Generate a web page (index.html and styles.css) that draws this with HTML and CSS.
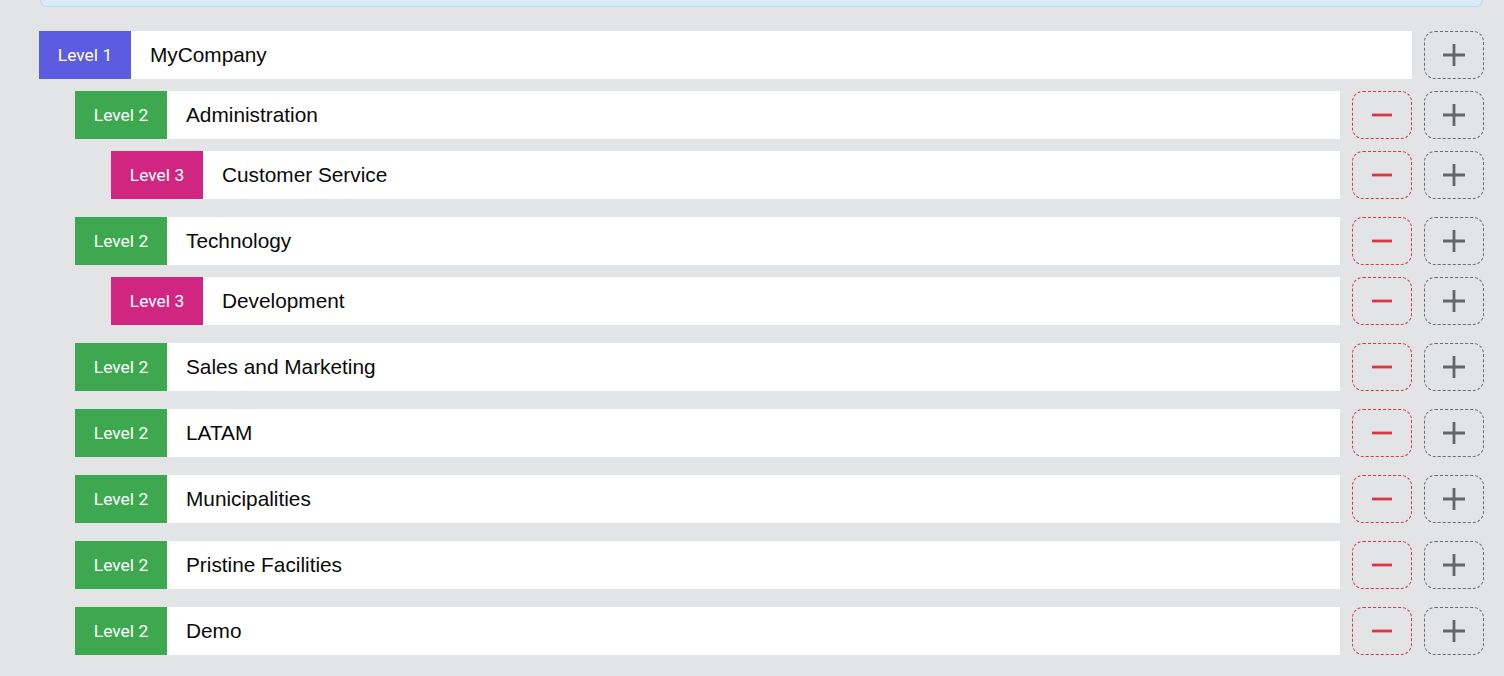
FILE: index.html
```html
<!DOCTYPE html>
<html lang="en">
<head>
<meta charset="utf-8">
<title>Org tree</title>
<link rel="stylesheet" href="styles.css">
</head>
<body>
<div class="page">
  <div class="notice"></div>
  <div class="tree">
    <div class="node">
      <div class="row">
        <div class="field"><span class="badge l1">Level 1</span><span class="label">MyCompany</span></div>
        <button class="btn add" aria-label="Add"><svg viewBox="0 0 24 24" width="24" height="24"><path d="M12 1v22M1 12h22"/></svg></button>
      </div>
      <div class="children">
        <div class="node">
          <div class="row">
            <div class="field"><span class="badge l2">Level 2</span><span class="label">Administration</span></div>
            <button class="btn remove" aria-label="Remove"><svg viewBox="0 0 24 24" width="24" height="24"><path d="M2 12h20"/></svg></button>
            <button class="btn add" aria-label="Add"><svg viewBox="0 0 24 24" width="24" height="24"><path d="M12 1v22M1 12h22"/></svg></button>
          </div>
          <div class="children">
            <div class="node">
              <div class="row">
                <div class="field"><span class="badge l3">Level 3</span><span class="label">Customer Service</span></div>
                <button class="btn remove" aria-label="Remove"><svg viewBox="0 0 24 24" width="24" height="24"><path d="M2 12h20"/></svg></button>
                <button class="btn add" aria-label="Add"><svg viewBox="0 0 24 24" width="24" height="24"><path d="M12 1v22M1 12h22"/></svg></button>
              </div>
            </div>
          </div>
        </div>
        <div class="node">
          <div class="row">
            <div class="field"><span class="badge l2">Level 2</span><span class="label">Technology</span></div>
            <button class="btn remove" aria-label="Remove"><svg viewBox="0 0 24 24" width="24" height="24"><path d="M2 12h20"/></svg></button>
            <button class="btn add" aria-label="Add"><svg viewBox="0 0 24 24" width="24" height="24"><path d="M12 1v22M1 12h22"/></svg></button>
          </div>
          <div class="children">
            <div class="node">
              <div class="row">
                <div class="field"><span class="badge l3">Level 3</span><span class="label">Development</span></div>
                <button class="btn remove" aria-label="Remove"><svg viewBox="0 0 24 24" width="24" height="24"><path d="M2 12h20"/></svg></button>
                <button class="btn add" aria-label="Add"><svg viewBox="0 0 24 24" width="24" height="24"><path d="M12 1v22M1 12h22"/></svg></button>
              </div>
            </div>
          </div>
        </div>
        <div class="node">
          <div class="row">
            <div class="field"><span class="badge l2">Level 2</span><span class="label">Sales and Marketing</span></div>
            <button class="btn remove" aria-label="Remove"><svg viewBox="0 0 24 24" width="24" height="24"><path d="M2 12h20"/></svg></button>
            <button class="btn add" aria-label="Add"><svg viewBox="0 0 24 24" width="24" height="24"><path d="M12 1v22M1 12h22"/></svg></button>
          </div>
        </div>
        <div class="node">
          <div class="row">
            <div class="field"><span class="badge l2">Level 2</span><span class="label">LATAM</span></div>
            <button class="btn remove" aria-label="Remove"><svg viewBox="0 0 24 24" width="24" height="24"><path d="M2 12h20"/></svg></button>
            <button class="btn add" aria-label="Add"><svg viewBox="0 0 24 24" width="24" height="24"><path d="M12 1v22M1 12h22"/></svg></button>
          </div>
        </div>
        <div class="node">
          <div class="row">
            <div class="field"><span class="badge l2">Level 2</span><span class="label">Municipalities</span></div>
            <button class="btn remove" aria-label="Remove"><svg viewBox="0 0 24 24" width="24" height="24"><path d="M2 12h20"/></svg></button>
            <button class="btn add" aria-label="Add"><svg viewBox="0 0 24 24" width="24" height="24"><path d="M12 1v22M1 12h22"/></svg></button>
          </div>
        </div>
        <div class="node">
          <div class="row">
            <div class="field"><span class="badge l2">Level 2</span><span class="label">Pristine Facilities</span></div>
            <button class="btn remove" aria-label="Remove"><svg viewBox="0 0 24 24" width="24" height="24"><path d="M2 12h20"/></svg></button>
            <button class="btn add" aria-label="Add"><svg viewBox="0 0 24 24" width="24" height="24"><path d="M12 1v22M1 12h22"/></svg></button>
          </div>
        </div>
        <div class="node">
          <div class="row">
            <div class="field"><span class="badge l2">Level 2</span><span class="label">Demo</span></div>
            <button class="btn remove" aria-label="Remove"><svg viewBox="0 0 24 24" width="24" height="24"><path d="M2 12h20"/></svg></button>
            <button class="btn add" aria-label="Add"><svg viewBox="0 0 24 24" width="24" height="24"><path d="M12 1v22M1 12h22"/></svg></button>
          </div>
        </div>
      </div>
    </div>
  </div>
</div>
</body>
</html>
```
FILE: styles.css
```css
* { box-sizing: border-box; }
html, body {
  margin: 0;
  padding: 0;
  background: #e3e4e6;
}
body {
  font-family: "Liberation Sans", Arial, sans-serif;
}
.page {
  padding: 0 20px 0 39px;
}
.notice {
  height: 7px;
  background: #d9ecf6;
  border: 1px solid #b9dcf0;
  border-top: none;
  border-radius: 0 0 8px 8px;
  margin-left: 1px;
  margin-right: 1px;
}
.tree {
  margin-top: 24px;
}
.node {
  display: flex;
  flex-direction: column;
}
.row {
  display: flex;
  gap: 12px;
  height: 48px;
}
.children {
  display: flex;
  flex-direction: column;
  gap: 18px;
  margin: 12px 0 0 36px;
}
.field {
  flex: 1;
  display: flex;
  align-items: stretch;
  background: #ffffff;
}
.badge {
  width: 92px;
  flex: none;
  display: flex;
  align-items: center;
  justify-content: center;
  color: #ffffff;
  font-family: Roboto, "Liberation Sans", sans-serif;
  font-size: 17.4px;
}
.badge.l1 { background: #5c5ce0; }
.badge.l2 { background: #3da84f; }
.badge.l3 { background: #d02682; }
.label {
  display: flex;
  align-items: center;
  padding-left: 19px;
  font-size: 20.8px;
  color: #0a0a0a;
}
.btn {
  width: 60px;
  height: 48px;
  flex: none;
  padding: 0;
  margin: 0;
  background: transparent;
  border-radius: 11px;
  display: flex;
  align-items: center;
  justify-content: center;
  cursor: pointer;
}
.btn svg {
  fill: none;
  stroke-width: 2.8;
}
.btn.add {
  border: 1px dashed #6b6b6b;
}
.btn.add svg { stroke: #666666; }
.btn.remove {
  border: 1px dashed #dc3545;
}
.btn.remove svg { stroke: #dc3545; }
```
